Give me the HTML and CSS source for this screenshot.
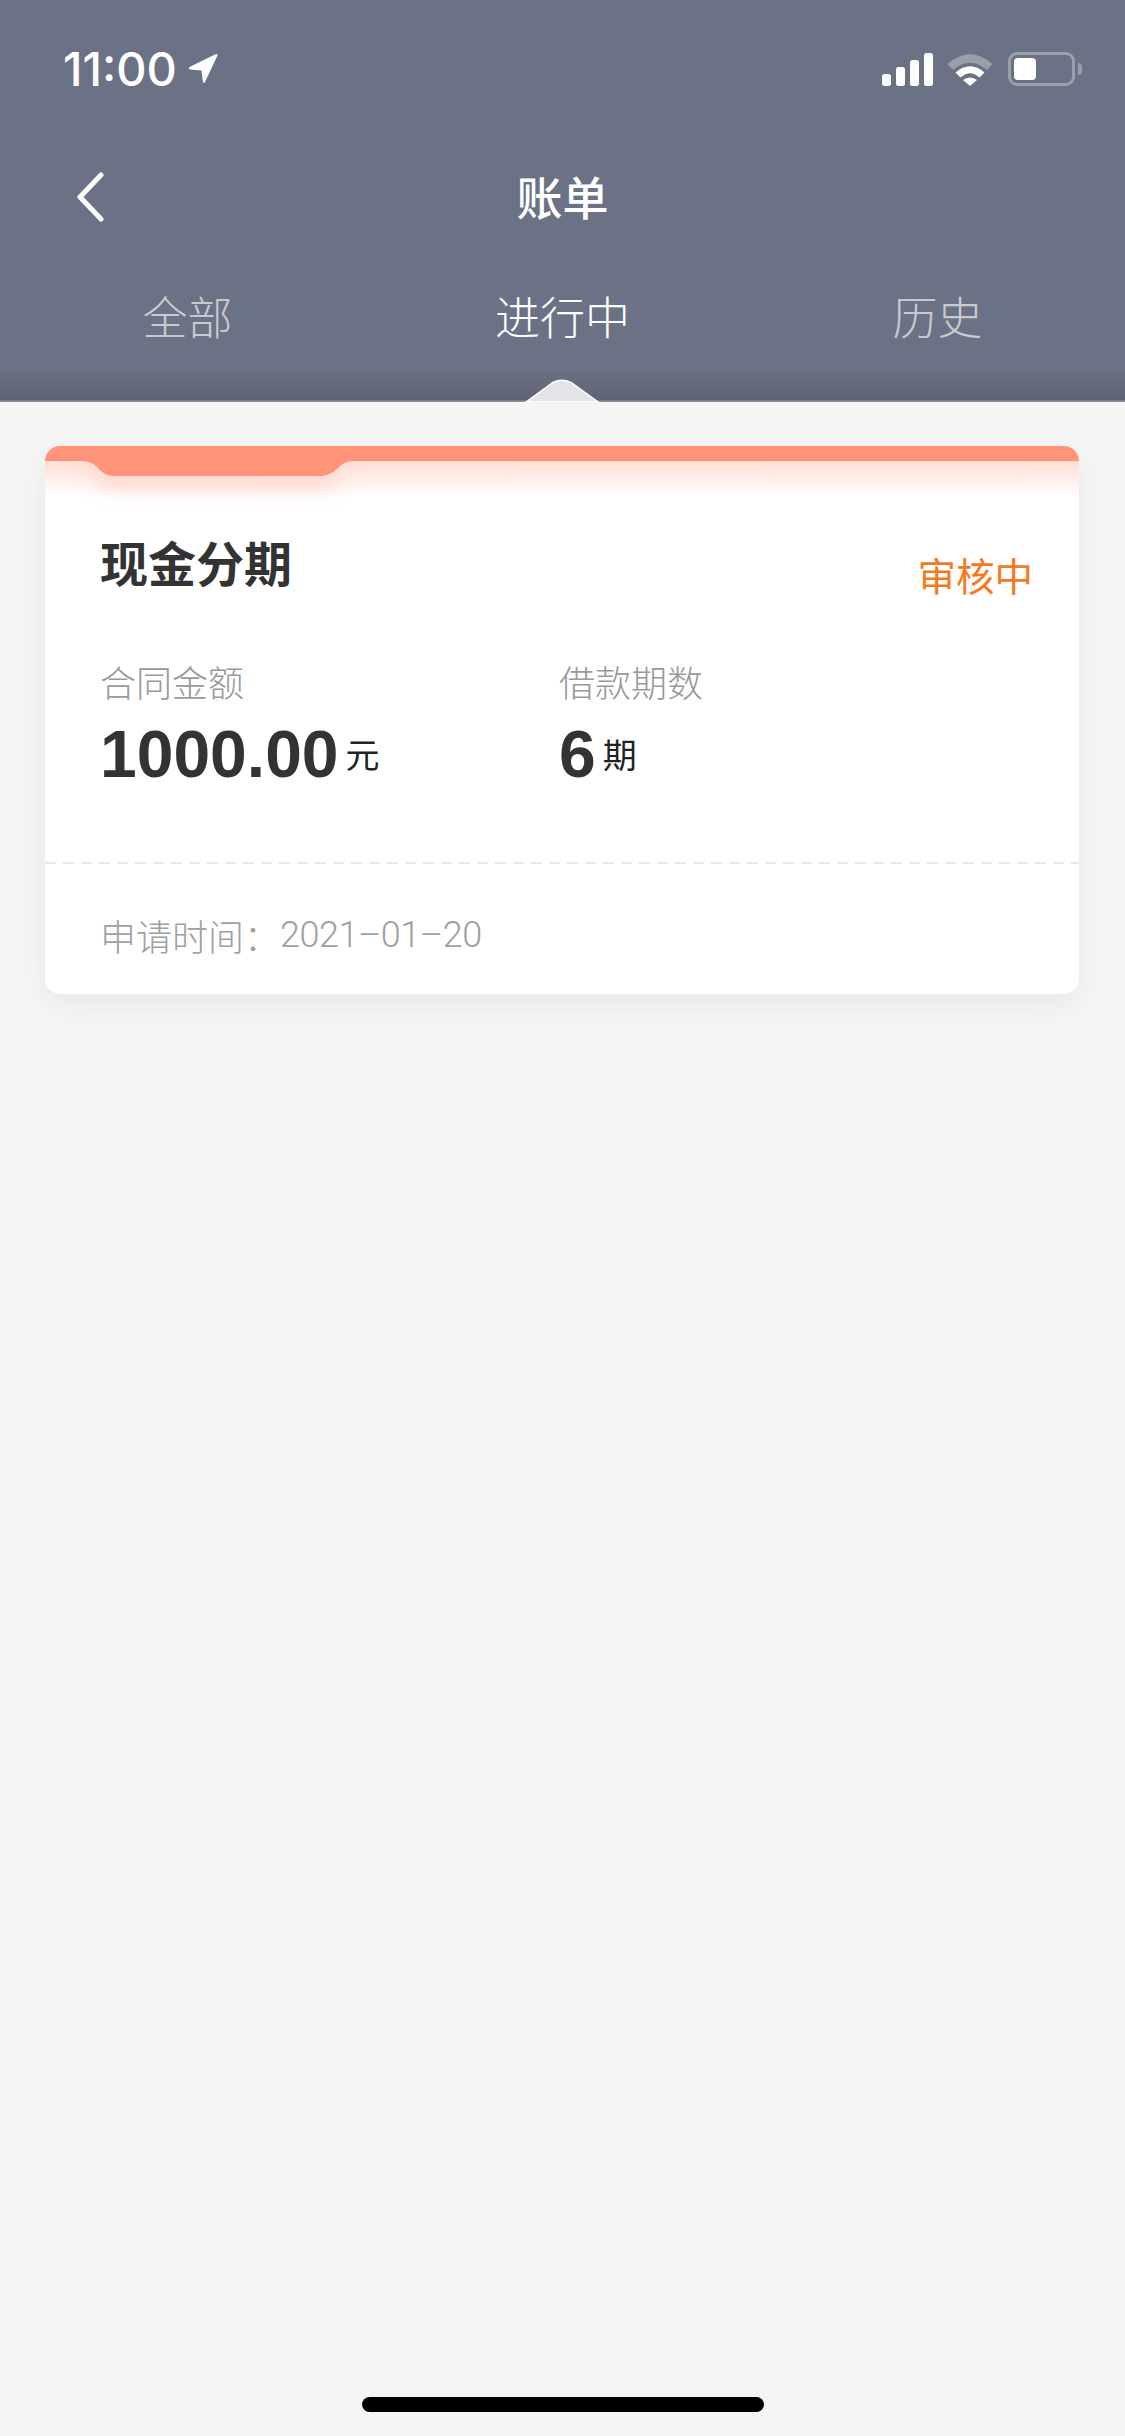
FILE: index.html
```html
<!DOCTYPE html>
<html lang="zh-CN">
<head>
<meta charset="utf-8">
<title>账单</title>
<link rel="stylesheet" href="styles.css">
</head>
<body>
<div class="page">
	<header class="top">
		<!-- status bar -->
		<div class="status">
			<div class="status-left">
				<span class="clock">11:00</span>
				<svg class="arrow" width="30" height="31" viewBox="0 0 30 31"><path d="M28 1 Q29.500 0.500 29.500 2.500 L17 29 Q15.500 31 14.800 28.500 L13.500 17.500 L2 16.500 Q0 15.500 1.500 14 Z" fill="#fff"/></svg>
			</div>
			<div class="status-right">
				<svg width="52" height="33" viewBox="0 0 52 33"><g fill="#fff"><rect x="0" y="21" width="9" height="12" rx="2.5"/><rect x="14" y="14" width="9" height="19" rx="2.5"/><rect x="28" y="7" width="9" height="26" rx="2.5"/><rect x="42" y="0" width="9" height="33" rx="2.5"/></g></svg>
				<svg class="wifi" width="46" height="34" viewBox="0 0 46 34"><path d="M0.500 12 Q23 -7.500 45.500 12 L40 18 Q23 3.500 6 18 Z" fill="#9a9fac"/><path d="M8.500 20.500 Q23 8 37.500 20.500 L32.500 25.500 Q23 17 13.500 25.500 Z" fill="#fff"/><path d="M16 28 Q23 23 30 28 L23 34 Z" fill="#fff"/></svg>
				<div class="battery"><div class="battery-level"></div></div>
				<div class="battery-nub"></div>
			</div>
		</div>
		<!-- title -->
		<div class="nav">
			<svg class="back" width="30" height="50" viewBox="0 0 30 50"><path d="M26 3 L5 25 L26 47" fill="none" stroke="#fff" stroke-width="5" stroke-linecap="round" stroke-linejoin="round"/></svg>
			<h1 class="title">账单</h1>
		</div>
		<!-- tabs -->
		<nav class="tabs">
			<a class="tab">全部</a>
			<a class="tab tab-on">进行中</a>
			<a class="tab">历史</a>
		</nav>
		<svg class="caret" width="74" height="23" viewBox="0 0 74 23"><path d="M1 23 L28 3.500 Q37 -1 46 3.500 L73 23 Z" fill="#e3e4e8" stroke="#fff" stroke-width="1.500"/></svg>
	</header>

	<main class="list">
		<section class="card">
			<div class="stripe"></div>
			<div class="fade"></div>
			<svg class="notch" width="271" height="15" viewBox="0 0 271 15"><path d="M0 0 Q8 0 14 5 Q22 15 32 15 H238 Q248 15 256 7 Q262 0 271 0 Z" fill="#ff9479"/></svg>
			<div class="card-body">
				<div class="card-head">
					<h2 class="name">现金分期</h2>
					<span class="state">审核中</span>
				</div>
				<div class="facts">
					<div class="fact">
						<div class="fact-label">合同金额</div>
						<div class="fact-value"><b>1000.00</b><span>元</span></div>
					</div>
					<div class="fact">
						<div class="fact-label">借款期数</div>
						<div class="fact-value"><b>6</b><span>期</span></div>
					</div>
				</div>
			</div>
			<div class="dash"></div>
			<div class="card-foot"><span>申请时间：</span><span class="date">2021–01–20</span></div>
		</section>
	</main>

	<div class="home-bar"></div>
</div>
</body>
</html>
```

FILE: styles.css
```css
*{
	box-sizing:border-box;
}
html,body{
	margin:0;
	padding:0;
}
body{
	background:#f5f5f5;
	font-family:"Noto Sans CJK SC","Liberation Sans",sans-serif;
}
.page{
	width:1125px;
	height:2436px;
	display:flex;
	flex-direction:column;
	overflow:hidden;
}
h1,h2{
	margin:0;
}

/* header */
.top{
	position:relative;
	height:402px;
	flex:none;
	background:linear-gradient(#6b7285 0,#6b7285 368px,#5f6474 400px,#8d91a0 401px);
	color:#fff;
}
.status{
	height:132px;
	padding:52px 43px 0 63px;
	display:flex;
	justify-content:space-between;
	align-items:flex-start;
}
.status-left{
	display:flex;
	align-items:center;
	height:33px;
	gap:11px;
}
.clock{
	font-family:Inter,"Liberation Sans",sans-serif;
	font-size:47px;
	font-weight:500;
	letter-spacing:0;
	line-height:33px;
}
.status-right{
	display:flex;
	align-items:center;
	height:34px;
}
.wifi{
	margin-left:13px;
	margin-right:15px;
}
.battery{
	width:67px;
	height:34px;
	border:3px solid #9a9fac;
	border-radius:9px;
	padding:3px;
}
.battery-level{
	width:22px;
	height:22px;
	background:#fff;
	border-radius:4px;
}
.battery-nub{
	width:4px;
	height:12px;
	margin-left:3px;
	background:#9a9fac;
	border-radius:0 4px 4px 0;
}
.nav{
	height:132px;
	display:grid;
	grid-template-columns:1fr auto 1fr;
	align-items:center;
	padding:0 75px;
}
.back{
	margin-top:-2px;
}
.title{
	font-size:46px;
	font-weight:500;
	line-height:68px;
	margin-top:-7px;
}
.tabs{
	display:grid;
	grid-template-columns:repeat(3,1fr);
	margin-top:20px;
}
.tab{
	text-align:center;
	font-size:45px;
	line-height:64px;
	color:#c9cacd;
	font-weight:300;
}
.tab-on{
	color:#fff;
}
.caret{
	position:absolute;
	left:525px;
	bottom:0;
}

/* card */
.list{
	flex:1;
	padding:44px 46px 0 45px;
}
.card{
	position:relative;
	height:548px;
	background:#fff;
	border-radius:15px;
	overflow:hidden;
	box-shadow:0 10px 30px rgba(0,0,0,.06);
}
.stripe{
	height:15px;
	background:#ff9479;
}
.fade{
	height:36px;
	background:linear-gradient(rgba(255,148,121,.32),rgba(255,148,121,0));
}
.notch{
	position:absolute;
	left:37px;
	top:15px;
	overflow:visible;
	filter:drop-shadow(0 12px 10px rgba(255,148,121,.35));
}
.card-body{
	height:416px;
	margin-top:-51px;
	padding:80px 46px 0 55px;
}
.card-head{
	display:flex;
	justify-content:space-between;
	align-items:flex-start;
}
.name{
	font-size:48px;
	font-weight:700;
	line-height:70px;
	color:#333;
}
.state{
	font-size:38.5px;
	line-height:54px;
	margin-top:21px;
	color:#f57a1e;
}
.facts{
	display:flex;
	margin-top:54px;
}
.fact{
	width:459px;
}
.fact-label{
	font-size:36px;
	line-height:52px;
	color:#999;
	font-weight:300;
}
.fact-value{
	display:flex;
	align-items:center;
	margin-top:9px;
	color:#222;
}
.fact-value b{
	font-family:"Liberation Sans",sans-serif;
	font-size:66px;
	line-height:76px;
	color:#333;
}
.fact-value span{
	font-size:34px;
	line-height:50px;
	margin-left:7px;
	font-weight:400;
}
.dash{
	height:2px;
	background:repeating-linear-gradient(90deg,#e9e9e9 0,#e9e9e9 11px,transparent 11px,transparent 18px);
}
.card-foot{
	padding:45px 0 0 55px;
	font-size:36px;
	line-height:52px;
	color:#a0a0a0;
	font-weight:300;
	display:flex;
}
.date{
	font-family:Roboto,"Liberation Sans",sans-serif;
	font-size:36px;
	font-weight:300;
	letter-spacing:-.5px;
}

.home-bar{
	flex:none;
	width:402px;
	height:15px;
	margin:0 auto 24px;
	background:#000;
	border-radius:8px;
}
```
